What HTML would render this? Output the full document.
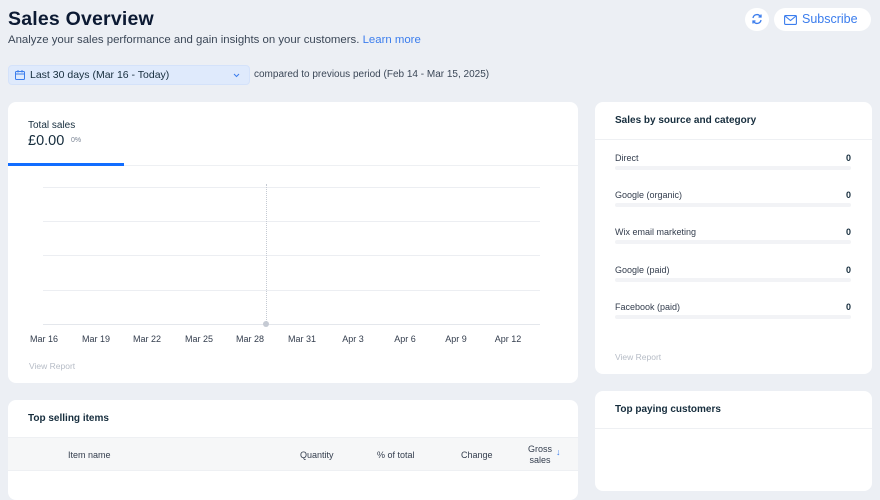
<!DOCTYPE html>
<html><head><meta charset="utf-8"><style>
*{box-sizing:border-box;margin:0;padding:0}
body{width:880px;height:483px;overflow:hidden;background:#eceff4;font-family:"Liberation Sans",sans-serif;color:#162d3d;position:relative}
.abs{position:absolute}
.card{position:absolute;background:#fff;border-radius:8px}
h1{position:absolute;left:8px;top:8px;font-size:19.5px;font-weight:bold;color:#0c1a33;letter-spacing:0.2px}
.sub{left:8px;top:34px;font-size:11.4px;color:#3b4757}
.sub span{color:#3b7ded}
.btn{position:absolute;background:#fff;border-radius:14px;height:23px;top:8px}
.lbl{font-size:9px;color:#333d4d;position:absolute}
.xl{position:absolute;top:334px;font-size:9px;color:#333d4d;width:40px;text-align:center}
.grid{position:absolute;left:43px;width:497px;height:1px;background:#eceef2}
.row{position:absolute;left:615px;width:236px}
.row .t{font-size:9px;color:#333d4d}
.row .v{position:absolute;right:0;top:0;font-size:9px;font-weight:bold}
.row .b{position:absolute;left:0;top:13px;width:236px;height:4px;background:#f2f3f6;border-radius:2px}
</style></head><body>
<h1>Sales Overview</h1>
<div class="abs sub">Analyze your sales performance and gain insights on your customers. <span>Learn more</span></div>
<div class="btn" style="left:745px;width:24px;"><svg class="abs" style="left:6px;top:5px" width="12" height="12" viewBox="0 0 12 12" fill="none" stroke="#3b7ded" stroke-width="1.3"><path d="M2 5a4 4 0 0 1 7-2l1 1M10 7a4 4 0 0 1-7 2L2 8"/><path d="M10 1.5v2.5H7.5M2 10.5V8h2.5"/></svg></div>
<div class="btn" style="left:774px;width:97px;"><svg class="abs" style="left:10px;top:7px" width="13" height="10" viewBox="0 0 13 10" fill="none" stroke="#3b7ded" stroke-width="1.1"><rect x="0.6" y="0.6" width="11.8" height="8.8" rx="1"/><path d="M1 1l5.5 4.5L12 1"/></svg><span class="abs" style="left:28px;top:4px;font-size:12.5px;color:#3b7ded">Subscribe</span></div>
<div class="abs" style="left:8px;top:65px;width:242px;height:20px;background:#dfeafc;border-radius:4px;border:1px solid #d4e2fa">
<svg class="abs" style="left:6px;top:4px" width="10" height="10" viewBox="0 0 10 10" fill="none" stroke="#3b7ded" stroke-width="1"><rect x="0.5" y="1.5" width="9" height="8" rx="1"/><path d="M0.5 4h9M3 0v2.5M7 0v2.5"/></svg>
<span class="abs" style="left:21px;top:3px;font-size:10.5px;color:#162d3d">Last 30 days (Mar 16 - Today)</span>
<svg class="abs" style="left:224px;top:7px" width="7" height="5" viewBox="0 0 7 5" fill="none" stroke="#3b7ded" stroke-width="1"><path d="M1 1l2.5 2.5L6 1"/></svg></div>
<div class="abs" style="left:254px;top:69px;font-size:10px;color:#3b4757">compared to previous period (Feb 14 - Mar 15, 2025)</div>

<div class="card" style="left:8px;top:102px;width:570px;height:281px">
<div class="abs" style="left:20px;top:18px;font-size:10px;color:#162d3d">Total sales</div>
<div class="abs" style="left:20px;top:31px;font-size:14.5px;color:#162d3d">£0.00</div>
<div class="abs" style="left:63px;top:35px;font-size:7px;color:#7a8494">0%</div>
<div class="abs" style="left:0;top:61px;width:116px;height:3px;background:#116dff"></div>
<div class="abs" style="left:116px;top:63px;width:454px;height:1px;background:#eef0f3"></div>
</div>
<div class="grid" style="top:187px"></div><div class="grid" style="top:221px"></div><div class="grid" style="top:255px"></div><div class="grid" style="top:290px"></div><div class="grid" style="top:324px;background:#e4e7ec"></div>
<div class="abs" style="left:266px;top:184px;height:140px;border-left:1px dotted #c5cad3"></div>
<div class="abs" style="left:263px;top:321px;width:6px;height:6px;border-radius:3px;background:#c5cad3"></div>
<div class="xl" style="left:24px">Mar 16</div><div class="xl" style="left:76px">Mar 19</div><div class="xl" style="left:127px">Mar 22</div><div class="xl" style="left:179px">Mar 25</div><div class="xl" style="left:230px">Mar 28</div><div class="xl" style="left:282px">Mar 31</div><div class="xl" style="left:333px">Apr 3</div><div class="xl" style="left:385px">Apr 6</div><div class="xl" style="left:436px">Apr 9</div><div class="xl" style="left:488px">Apr 12</div>
<div class="abs" style="left:29px;top:361px;font-size:8.5px;color:#b6bcc6">View Report</div>

<div class="card" style="left:595px;top:102px;width:277px;height:272px">
<div class="abs" style="left:20px;top:13px;font-size:10px;font-weight:bold;color:#162d3d">Sales by source and category</div>
<div class="abs" style="left:0;top:37px;width:277px;height:1px;background:#eef0f3"></div>
<div class="abs" style="left:20px;top:250px;font-size:8.5px;color:#b6bcc6">View Report</div>
</div>
<div class="row" style="top:153px"><div class="t">Direct</div><div class="v">0</div><div class="b"></div></div>
<div class="row" style="top:190px"><div class="t">Google (organic)</div><div class="v">0</div><div class="b"></div></div>
<div class="row" style="top:227px"><div class="t">Wix email marketing</div><div class="v">0</div><div class="b"></div></div>
<div class="row" style="top:265px"><div class="t">Google (paid)</div><div class="v">0</div><div class="b"></div></div>
<div class="row" style="top:302px"><div class="t">Facebook (paid)</div><div class="v">0</div><div class="b"></div></div>

<div class="card" style="left:8px;top:400px;width:570px;height:100px">
<div class="abs" style="left:20px;top:13px;font-size:10px;font-weight:bold">Top selling items</div>
<div class="abs" style="left:0;top:37px;width:570px;height:34px;background:#f6f7f8;border-top:1px solid #eef0f3;border-bottom:1px solid #eef0f3"></div>
<div class="lbl" style="left:60px;top:50px">Item name</div>
<div class="lbl" style="left:292px;top:50px">Quantity</div>
<div class="lbl" style="left:369px;top:50px">% of total</div>
<div class="lbl" style="left:453px;top:50px">Change</div>
<div class="lbl" style="left:520px;top:44px;text-align:center;line-height:11px">Gross<br>sales</div>
<div class="abs" style="left:548px;top:47px;font-size:9px;color:#3b7ded">↓</div>
</div>
<div class="card" style="left:595px;top:391px;width:277px;height:100px">
<div class="abs" style="left:20px;top:13px;font-size:10px;font-weight:bold">Top paying customers</div>
<div class="abs" style="left:0;top:37px;width:277px;height:1px;background:#eef0f3"></div>
</div>
</body></html>
